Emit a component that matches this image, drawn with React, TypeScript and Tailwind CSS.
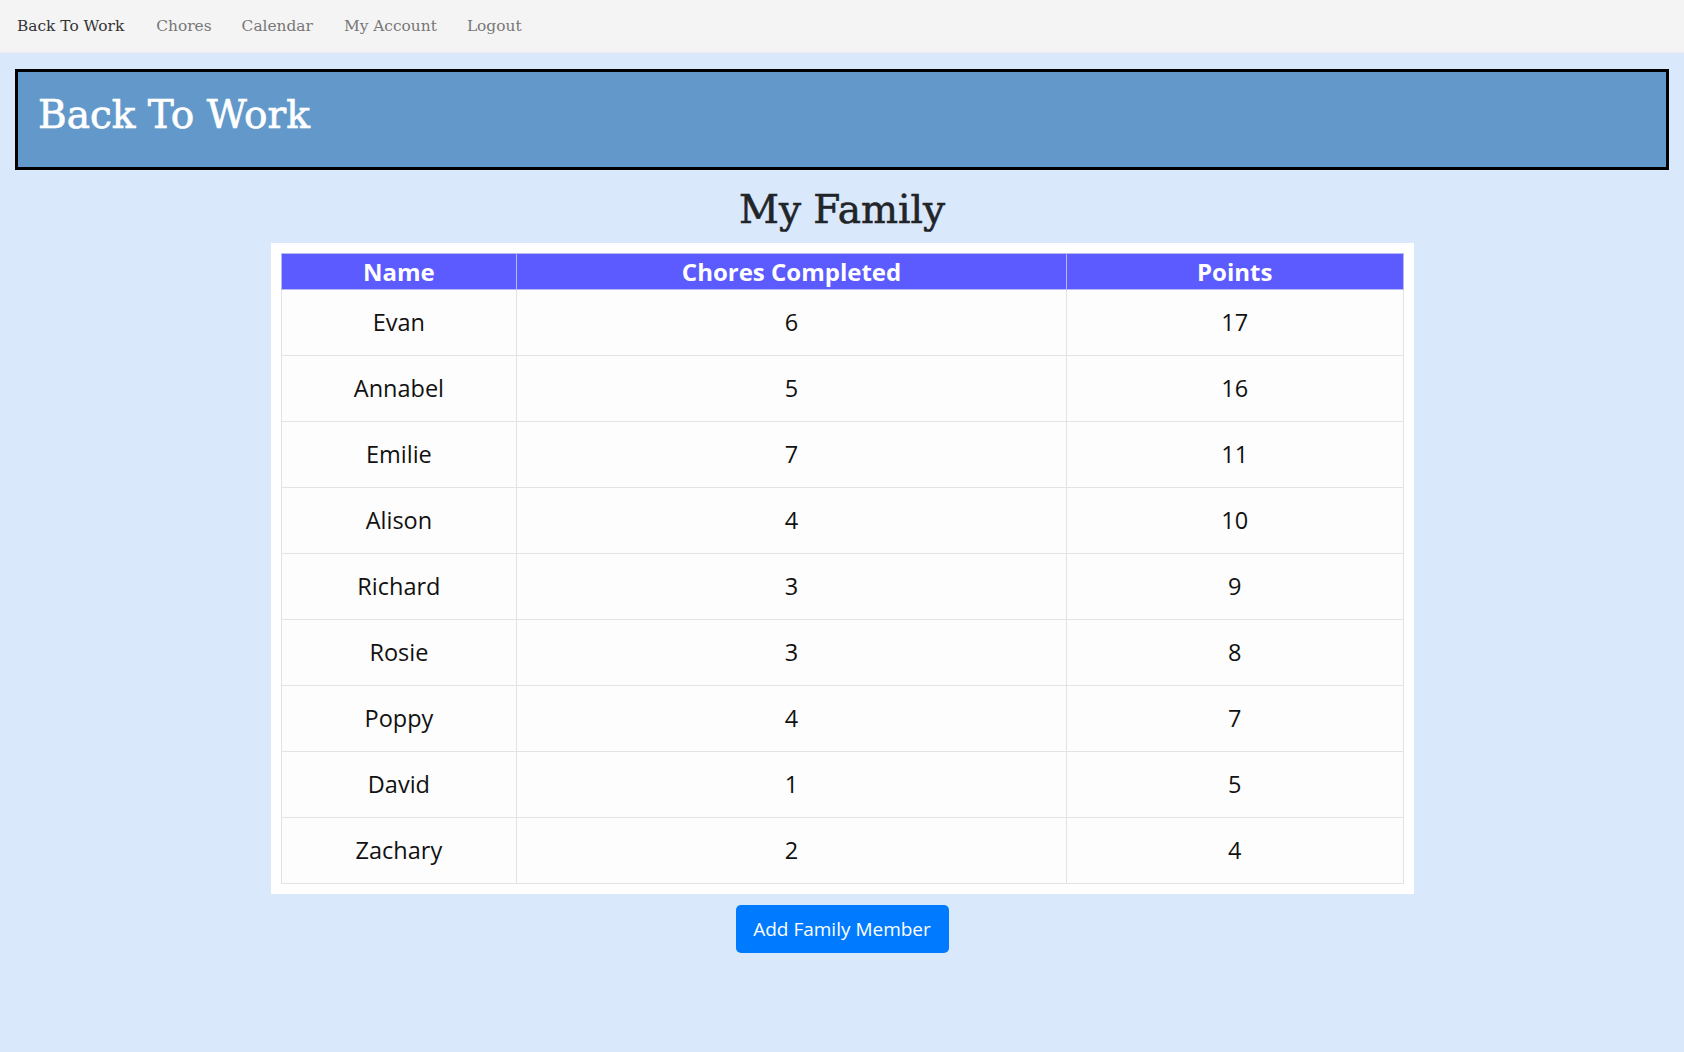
import React from "react";

const rows: [string, number, number][] = [
  ["Evan", 6, 17],
  ["Annabel", 5, 16],
  ["Emilie", 7, 11],
  ["Alison", 4, 10],
  ["Richard", 3, 9],
  ["Rosie", 3, 8],
  ["Poppy", 4, 7],
  ["David", 1, 5],
  ["Zachary", 2, 4],
];

export default function App() {
  return (
    <div className="min-h-[1052px] bg-[#d9e8fa] text-[#212529]">
      <nav className="h-[53px] bg-[#f4f4f4] border-b border-[#ececec] flex items-center pl-[17px] pt-[2px] font-['DejaVu_Serif',serif] text-[15.4px]">
        <span className="text-[#333]">Back To Work</span>
        <span className="ml-[32px] text-[#777]">Chores</span>
        <span className="ml-[30px] text-[#777]">Calendar</span>
        <span className="ml-[31px] text-[#777]">My Account</span>
        <span className="ml-[30px] text-[#777]">Logout</span>
      </nav>
      <div className="mx-[15px] mt-[16px] h-[101px] border-[3px] border-black bg-[#6399ca] flex items-center pl-[20px] pb-[8px]">
        <h1 className="font-['DejaVu_Serif',serif] text-[39px] font-normal text-white [-webkit-text-stroke:0.7px_#fff]">Back To Work</h1>
      </div>
      <div className="h-[73px] flex items-center justify-center pt-[8px]">
        <h2 className="font-['DejaVu_Serif',serif] text-[39px] font-normal text-[#212529] [-webkit-text-stroke:0.6px_#212529]">My Family</h2>
      </div>
      <div className="w-[1143px] mx-auto bg-white p-[10px]">
        <table className="w-[1123px] border-collapse font-['Open_Sans',sans-serif] text-[23.5px]">
          <thead>
            <tr className="bg-[#5b5bff] text-white">
              <th className="w-[236px] h-[36px] border border-[#b9b9f0] font-bold text-[24px] leading-none">Name</th>
              <th className="w-[550px] h-[36px] border border-[#b9b9f0] font-bold text-[24px] leading-none">Chores Completed</th>
              <th className="w-[337px] h-[36px] border border-[#b9b9f0] font-bold text-[24px] leading-none">Points</th>
            </tr>
          </thead>
          <tbody>
            {rows.map(([n, c, p]) => (
              <tr key={n} className="bg-[#fdfdfd] text-[#111]">
                <td className="h-[66px] border border-[#e3e3e6] text-center">{n}</td>
                <td className="h-[66px] border border-[#e3e3e6] text-center">{c}</td>
                <td className="h-[66px] border border-[#e3e3e6] text-center">{p}</td>
              </tr>
            ))}
          </tbody>
        </table>
      </div>
      <div className="flex justify-center mt-[11px]">
        <button className="h-[48px] w-[213px] rounded-[5px] bg-[#007bff] text-white font-['Open_Sans',sans-serif] text-[19px]">
          Add Family Member
        </button>
      </div>
    </div>
  );
}
